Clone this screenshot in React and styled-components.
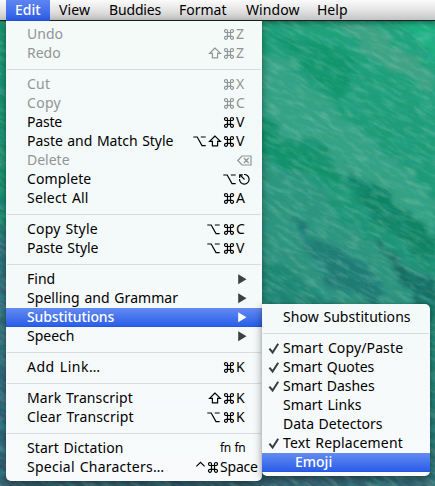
import React from 'react';
import styled, { createGlobalStyle } from 'styled-components';

const GlobalStyle = createGlobalStyle`
  * { box-sizing: border-box; }
  html, body { margin: 0; height: 100%; overflow: hidden; }
`;

const Desktop = styled.main`
  position: relative;
  width: 435px;
  height: 486px;
  overflow: hidden;
  background: #2a7f74;
  color: #000;
  font: 14px/17px 'Noto Sans', 'Open Sans', sans-serif;
  word-spacing: 1px;
`;

const Wallpaper = styled.svg`
  position: absolute;
  inset: 0;
  width: 435px;
  height: 486px;
`;

const MenuBar = styled.nav`
  position: relative;
  display: flex;
  height: 21px;
  padding-left: 6px;
  background: linear-gradient(#fbfbfb, #e4e4e4 50%, #c4c4c4);
  border-bottom: 1px solid #14261f;
  box-shadow: 0 1px 6px rgba(0, 0, 0, 0.5);
  line-height: 19px;
`;

const MenuTitle = styled.span`
  width: ${({ $width }) => $width}px;
  height: ${({ $open }) => ($open ? 21 : 20)}px;
  padding-left: 9px;
  color: ${({ $open }) => ($open ? '#fff' : '#000')};
  font-weight: ${({ $open }) => ($open ? 500 : 400)};
  background: ${({ $open }) => ($open ? 'linear-gradient(#5f86f0, #2a5ce9)' : 'none')};
  letter-spacing: ${({ $track }) => $track || 0}px;
`;

const Menus = styled.div`
  position: relative;
  display: flex;
  align-items: flex-start;
  padding-left: 6px;
`;

const Panel = styled.div`
  position: relative;
  width: ${({ $width }) => $width}px;
  margin-top: ${({ $top }) => $top || 0}px;
  padding: 4px 0;
  background: ${({ $sub }) => ($sub
    ? 'linear-gradient(#f4f9f9, #f8fafc)'
    : 'linear-gradient(#f3faf8, #f4f9f9 50%, #f8fafc)')};
  border-radius: ${({ $sub }) => ($sub ? '0 5px 5px 5px' : '0 0 5px 5px')};
  box-shadow: 0 3px 9px rgba(0, 0, 0, 0.42), 0 0 1px rgba(0, 0, 0, 0.4);
`;

const Divider = styled.div`
  height: 12px;
  padding: 6px 1px 0;
  &::before {
    content: '';
    display: block;
    height: 1px;
    background: #d7dcdd;
  }
`;

const Row = styled.div`
  display: flex;
  height: 19px;
  padding-left: ${({ $indent }) => $indent || 21}px;
  color: ${({ $disabled, $active }) => ($active ? '#fff' : $disabled ? '#929595' : '#000')};
  font-weight: ${({ $active }) => ($active ? 500 : 400)};
  background: ${({ $active }) => ($active ? 'linear-gradient(#648bf1, #2b5fe9 94%, #2351d6)' : 'none')};
`;

const Label = styled.span`
  flex: 1;
  white-space: nowrap;
  letter-spacing: ${({ $track }) => $track || 0}px;
`;

const Shortcut = styled.span`
  display: flex;
  align-items: flex-start;
`;

const Key = styled.span`
  width: ${({ $wide }) => ($wide ? 43 : 27)}px;
  padding-left: 1px;
  letter-spacing: ${({ $wide }) => ($wide ? -0.2 : 0)}px;
`;

const FnKeys = styled.span`
  width: 42px;
  padding-top: 1px;
  font-size: 12px;
  line-height: 16px;
  letter-spacing: -0.4px;
`;

const Icon = styled.svg`
  display: block;
  overflow: visible;
  width: ${({ $width }) => $width || 13}px;
  height: 19px;
  margin-right: ${({ $after }) => $after || 0}px;
  fill: none;
  stroke: currentColor;
  stroke-width: 1.2;
`;

const Solid = styled(Icon)`
  color: ${({ $active }) => ($active ? '#fff' : '#3d4040')};
  fill: currentColor;
  stroke: none;
`;

const CheckIcon = styled(Icon)`
  margin-left: -15px;
  margin-right: 3px;
  stroke: #3b3e40;
  stroke-width: 2;
`;

const Cmd = () => (
  <Icon viewBox="0 0 13 19">
    <path d="M5.5 7.5h4.4a1.5 1.5 0 1 0-1.4-1.5v6.8a1.5 1.5 0 1 0 1.4-1.5H4.1a1.5 1.5 0 1 0 1.4 1.5V6a1.5 1.5 0 1 0-1.4 1.5Z" />
  </Icon>
);
const Opt = () => (
  <Icon viewBox="0 0 13 19" $after={2}>
    <path d="M.3 5h3.9l4.8 8.6h3.7M7.8 5h4.9" />
  </Icon>
);
const Shift = () => (
  <Icon viewBox="0 0 13 19" $after={1}>
    <path d="M7 4L1.6 9.4h2.8v4.5h5.2V9.4h2.8Z" />
  </Icon>
);
const Erase = () => (
  <Icon viewBox="0 0 15 19" $width={15} $after={10}>
    <path d="M.8 9.5L5 5h9v9H5ZM6.9 7l4.8 5M11.7 7l-4.8 5" />
  </Icon>
);
const Escape = () => (
  <Icon viewBox="0 0 12 19" $width={12} $after={12}>
    <path d="M6 4.5a4.8 4.8 0 1 1-4.5 4.6M6.5 9.5L2.2 5.2M1.7 8V4.9h3.1" />
  </Icon>
);
const Ctrl = () => (
  <Icon viewBox="0 0 11 19" $width={11}>
    <path d="M1.4 8.4l4.1-4 4.1 4" />
  </Icon>
);
const Arrow = ({ active }) => (
  <Solid viewBox="0 0 9 19" $width={9} $after={15} $active={active}>
    <path d="M.2 4.2v10l8.3-5Z" />
  </Solid>
);
const Check = () => (
  <CheckIcon viewBox="0 0 12 19" $width={12}>
    <path d="M1.4 9.6l3.2 3.9L10.2 4.8" />
  </CheckIcon>
);

const glyphs = { cmd: Cmd, opt: Opt, shift: Shift, ctrl: Ctrl, erase: Erase, escape: Escape };

const titles = [
  ['Edit', 44, 0, true],
  ['View', 50, 0.1],
  ['Buddies', 70, -0.15],
  ['Format', 67, 0],
  ['Window', 71, 0.1],
  ['Help', 60, 0],
];

const editMenu = [
  { label: 'Undo', mods: ['cmd'], keyName: 'Z', disabled: true },
  { label: 'Redo', mods: ['shift', 'cmd'], keyName: 'Z', disabled: true },
  null,
  { label: 'Cut', mods: ['cmd'], keyName: 'X', disabled: true, track: 0.2 },
  { label: 'Copy', mods: ['cmd'], keyName: 'C', disabled: true, track: 0.3 },
  { label: 'Paste', mods: ['cmd'], keyName: 'V', track: -0.2 },
  { label: 'Paste and Match Style', mods: ['opt', 'shift', 'cmd'], keyName: 'V', track: -0.05 },
  { label: 'Delete', mods: ['erase'], disabled: true },
  { label: 'Complete', mods: ['opt', 'escape'], track: 0.1 },
  { label: 'Select All', mods: ['cmd'], keyName: 'A', track: 0.2 },
  null,
  { label: 'Copy Style', mods: ['opt', 'cmd'], keyName: 'C', track: 0.2 },
  { label: 'Paste Style', mods: ['opt', 'cmd'], keyName: 'V', track: -0.05 },
  null,
  { label: 'Find', submenu: true },
  { label: 'Spelling and Grammar', submenu: true, track: 0.05 },
  { label: 'Substitutions', submenu: true, active: true, track: -0.1 },
  { label: 'Speech', submenu: true },
  null,
  { label: 'Add Link…', mods: ['cmd'], keyName: 'K', track: 0.5 },
  null,
  { label: 'Mark Transcript', mods: ['shift', 'cmd'], keyName: 'K', track: 0.12 },
  { label: 'Clear Transcript', mods: ['opt', 'cmd'], keyName: 'K', track: 0.15 },
  null,
  { label: 'Start Dictation', fn: true, track: 0.08 },
  { label: 'Special Characters…', mods: ['ctrl', 'cmd'], keyName: 'Space', wide: true, track: 0.25 },
];

const substitutions = [
  { label: 'Show Substitutions', track: 0.05 },
  null,
  { label: 'Smart Copy/Paste', checked: true, track: 0.13 },
  { label: 'Smart Quotes', checked: true, track: -0.05 },
  { label: 'Smart Dashes', checked: true, track: -0.05 },
  { label: 'Smart Links', track: 0.05 },
  { label: 'Data Detectors' },
  { label: 'Text Replacement', checked: true, track: 0.15 },
  { label: 'Emoji', active: true, indent: 33 },
];

function MenuItem({ item }) {
  return (
    <Row $active={item.active} $disabled={item.disabled} $indent={item.indent}>
      {item.checked && <Check />}
      <Label $track={item.track}>{item.label}</Label>
      {item.submenu && <Arrow active={item.active} />}
      {item.fn && <FnKeys>fn fn</FnKeys>}
      {item.mods && (
        <Shortcut>
          {item.mods.map((name) => {
            const Glyph = glyphs[name];
            return <Glyph key={name} />;
          })}
          {item.keyName && <Key $wide={item.wide}>{item.keyName}</Key>}
        </Shortcut>
      )}
    </Row>
  );
}

const Menu = ({ items, ...panel }) => (
  <Panel {...panel}>
    {items.map((item, i) => (item ? <MenuItem key={item.label} item={item} /> : <Divider key={i} />))}
  </Panel>
);

function Ocean() {
  return (
    <Wallpaper viewBox="0 0 435 486" preserveAspectRatio="none">
      <defs>
        <linearGradient id="sea" x1="0.75" y1="0" x2="0.4" y2="1">
          <stop offset="0" stopColor="#1fa37a" />
          <stop offset="0.35" stopColor="#1d9776" />
          <stop offset="0.6" stopColor="#1f8272" />
          <stop offset="0.8" stopColor="#2a6f72" />
          <stop offset="1" stopColor="#2d586a" />
        </linearGradient>
        <filter id="soft" x="-20%" y="-20%" width="140%" height="140%">
          <feTurbulence type="fractalNoise" baseFrequency="0.03 0.07" numOctaves="3" seed="3" />
          <feDisplacementMap in="SourceGraphic" scale="24" xChannelSelector="R" yChannelSelector="G" result="d" />
          <feGaussianBlur in="d" stdDeviation="2" />
        </filter>
        <filter id="light" x="0" y="0" width="100%" height="100%">
          <feTurbulence type="fractalNoise" baseFrequency="0.06 0.22" numOctaves="4" seed="8" />
          <feColorMatrix values="0 0 0 0 0.38  0 0 0 0 0.68  0 0 0 0 0.57  2.6 0 0 0 -1.15" />
        </filter>
        <filter id="dark" x="0" y="0" width="100%" height="100%">
          <feTurbulence type="fractalNoise" baseFrequency="0.05 0.18" numOctaves="4" seed="21" />
          <feColorMatrix values="0 0 0 0 0.03  0 0 0 0 0.38  0 0 0 0 0.35  2.6 0 0 0 -1.2" />
        </filter>
      </defs>
      <rect width="435" height="486" fill="url(#sea)" />
      <g filter="url(#soft)">
        <path d="M255 45L300 75 350 125 435 190 435 240 330 170 255 110Z" fill="#3fa487" opacity=".75" />
        <path d="M330 20L370 25 435 75 435 95 375 60Z" fill="#4aa385" opacity=".75" />
        <path d="M400 20L435 20 435 62Z" fill="#20b984" opacity=".7" />
        <path d="M255 165L310 175 345 225 435 280 435 330 340 305 255 250Z" fill="#359782" opacity=".65" />
        <path d="M255 118L330 150 345 185 290 170 255 155Z" fill="#0b9068" opacity=".8" />
        <path d="M270 30L325 40 355 60 345 100 305 75Z" fill="#119369" opacity=".8" />
        <path d="M350 165L395 205 435 235 435 262 380 225 350 195Z" fill="#0b8062" opacity=".85" />
        <path d="M370 240L435 285 435 320 400 285Z" fill="#126b61" opacity=".9" />
        <path d="M290 215L370 270 385 305 330 290Z" fill="#176f70" opacity=".65" />
        <path d="M0 25H8V225H0Z" fill="#14936c" />
        <path d="M0 230H8V486H0Z" fill="#326b80" />
        <path d="M0 478H435V486H0Z" fill="#345f70" />
      </g>
      <g transform="rotate(28 350 160)">
        <rect x="-160" y="-220" width="850" height="900" filter="url(#light)" opacity=".27" />
        <rect x="-160" y="-220" width="850" height="900" filter="url(#dark)" opacity=".38" />
      </g>
    </Wallpaper>
  );
}

export default function App() {
  return (
    <>
      <GlobalStyle />
      <Desktop>
        <Ocean />
        <MenuBar>
          {titles.map(([name, width, track, open]) => (
            <MenuTitle key={name} $width={width} $track={track} $open={open}>{name}</MenuTitle>
          ))}
        </MenuBar>
        <Menus>
          <Menu items={editMenu} $width={256} />
          <Menu items={substitutions} $width={168} $top={283} $sub />
        </Menus>
      </Desktop>
    </>
  );
}
